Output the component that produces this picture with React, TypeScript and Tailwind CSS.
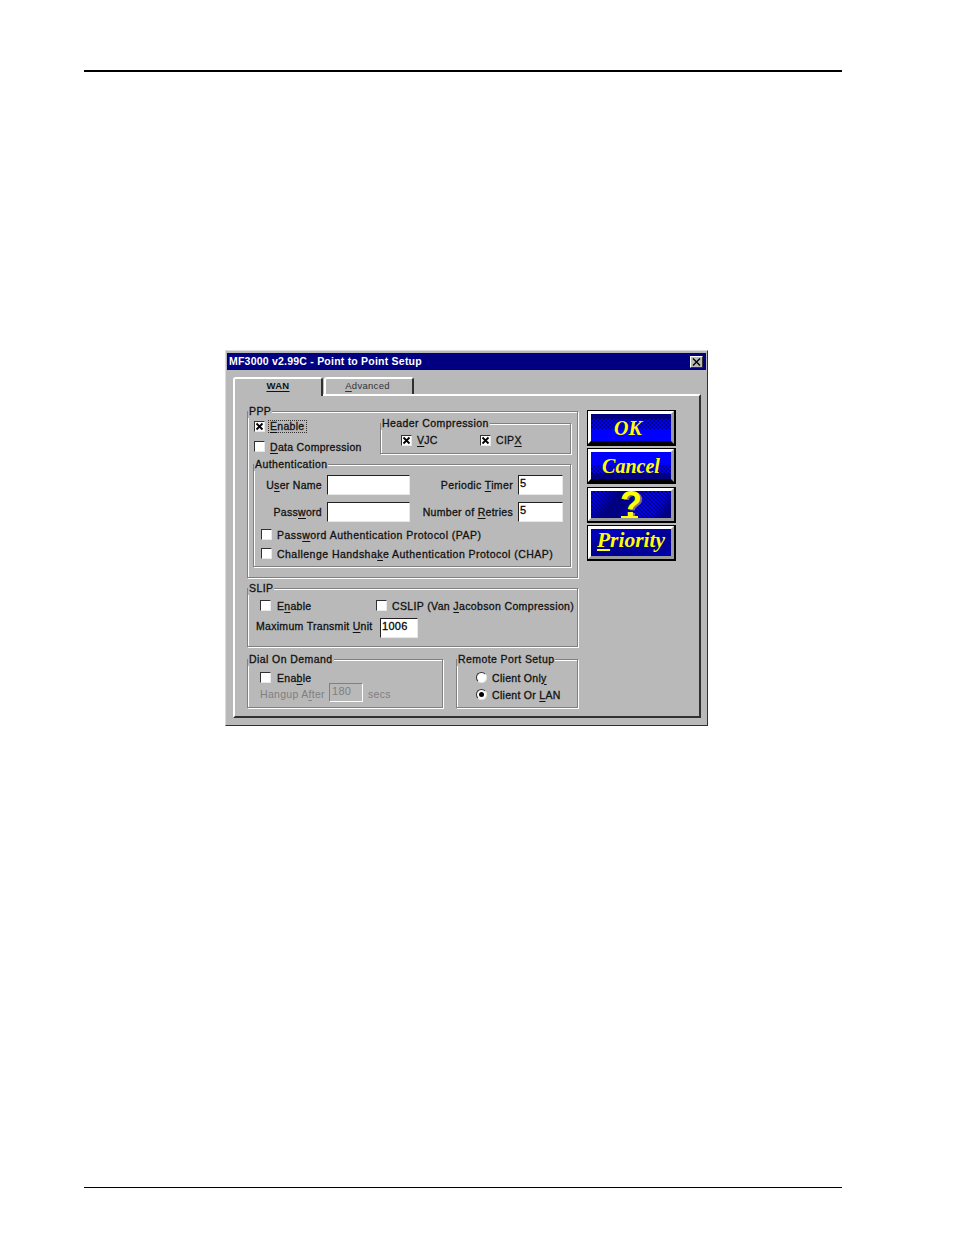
import React from 'react';

const U = ({ children }: { children: React.ReactNode }) => <span className="underline underline-offset-2">{children}</span>;

// labels sit one pixel below the centre of their row
const T = ({ className = '', children }: { className?: string; children: React.ReactNode }) => (
  <span className={`pt-[2px] whitespace-nowrap ${className}`}>{children}</span>
);

function GroupBox({ title, className, children }: { title: string; className: string; children?: React.ReactNode }) {
  return (
    <div className={`relative shrink-0 border border-[#808080] shadow-[inset_1px_1px_0_#fff,1px_1px_0_#fff] ${className}`}>
      <span className="absolute -top-[8px] left-[0px] bg-[#b9b9b9] px-px leading-[14px] tracking-[0.42px] whitespace-nowrap">{title}</span>
      {children}
    </div>
  );
}

function Check({ checked = false }: { checked?: boolean }) {
  return (
    <div className="w-[11px] h-[11px] shrink-0 bg-white border border-t-[#303030] border-l-[#303030] border-r-[#e8e8e8] border-b-[#e8e8e8]">
      {checked && (
        <svg viewBox="0 0 9 9" className="block w-[9px] h-[9px]">
          <path d="M1.5 1.5 L7.5 7.5 M7.5 1.5 L1.5 7.5" stroke="#000" strokeWidth="1.8" />
        </svg>
      )}
    </div>
  );
}

function Radio({ on = false }: { on?: boolean }) {
  return (
    <div className="flex items-center justify-center w-[11px] h-[11px] shrink-0 rounded-full bg-white border border-t-[#303030] border-l-[#303030] border-r-[#e8e8e8] border-b-[#e8e8e8]">
      {on && <div className="w-[5px] h-[5px] rounded-full bg-black" />}
    </div>
  );
}

function Input({ value, className, disabled = false }: { value?: string; className: string; disabled?: boolean }) {
  return (
    <div className={`shrink-0 border border-t-[#202020] border-l-[#202020] border-r-[#e8e8e8] border-b-[#e8e8e8] leading-[15px] text-[11px] ${disabled ? 'bg-[#b9b9b9] text-[#808080]' : 'bg-white text-black'} ${className}`}>
      {value}
    </div>
  );
}

function PicButton({ className, face, children }: { className: string; face: string; children: React.ReactNode }) {
  return (
    <div className={`border border-black bg-black pr-px pb-px ${className}`}>
      <div className={`flex items-center justify-center h-full border-[3px] border-t-white border-l-white border-r-[#9a9a9a] font-['Liberation_Serif'] italic font-bold text-[#ffff00] ${face}`}>
        {children}
      </div>
    </div>
  );
}

export default function App() {
  return (
    <div className="w-[954px] h-[1235px] bg-white overflow-hidden font-['Liberation_Sans',sans-serif] text-[10.5px] tracking-[0.3px] text-[#111] [-webkit-text-stroke:0.3px_#111]">
      <div className="h-[70px]" />
      <div className="ml-[84px] w-[758px] h-[2px] bg-black" />

      {/* dialog */}
      <div className="ml-[225px] mt-[278px] w-[483px] h-[376px] bg-[#b9b9b9] border border-t-[#dcdcdc] border-l-[#dcdcdc] border-r-[#303030] border-b-[#303030] p-[1px] pt-[2px]">
        <div className="flex items-center justify-between h-[17px] bg-[#000080] pl-[2px] pr-[3px] text-white font-bold text-[10.5px] tracking-[0.22px] [-webkit-text-stroke:0]">
          <span>MF3000 v2.99C - Point to Point Setup</span>
          <span className="flex items-center justify-center w-[13px] h-[12px] bg-[#b9b9b9] border border-t-white border-l-white border-r-[#303030] border-b-[#303030]">
            <svg viewBox="0 0 9 8" className="w-[9px] h-[8px]">
              <path d="M1 0.5 L8 7.5 M8 0.5 L1 7.5" stroke="#000" strokeWidth="1.4" />
            </svg>
          </span>
        </div>

        {/* tabs */}
        <div className="flex items-end h-[24px] pl-[6px]">
          <div className="relative z-10 flex items-center justify-center w-[90px] h-[19px] -mb-[2px] bg-[#b9b9b9] border-t-2 border-l-2 border-white border-r-2 border-r-[#303030] rounded-tl-[3px] rounded-tr-[3px] text-[9.5px] font-bold [-webkit-text-stroke:0]">
            <span className="underline underline-offset-2 -mt-[2px]">WAN</span>
          </div>
          <div className="flex items-center justify-center w-[90px] h-[17px] ml-px bg-[#b9b9b9] border-t-2 border-l-2 border-white border-r-2 border-r-[#303030] rounded-tl-[3px] rounded-tr-[3px] text-[9.5px] text-[#333] [-webkit-text-stroke:0]">
            <span className="-ml-[3px]"><U>A</U>dvanced</span>
          </div>
        </div>

        {/* panel */}
        <div className="ml-[6px] w-[468px] h-[324px] border-2 border-t-white border-l-white border-r-[#303030] border-b-[#303030] flex pl-[12px] pt-[15px] gap-[9px]">
          <div className="w-[331px] shrink-0">
            <GroupBox title="PPP" className="w-[331px] h-[167px] pl-[5px]">
              <div className="flex h-[52px]">
                <div className="w-[127px] pl-[1px] pt-[9px]">
                  <div className="flex items-center gap-[3px] h-[11px]">
                    <Check checked />
                    <span className="border border-dotted border-[#333] px-px leading-[11px]"><U>E</U>nable</span>
                  </div>
                  <div className="flex items-center gap-[3px] h-[11px] mt-[9px]">
                    <Check />
                    <T className="ml-[2px]"><U>D</U>ata Compression</T>
                  </div>
                </div>
                <GroupBox title="Header Compression" className="w-[191px] h-[31px] mt-[11px] flex items-center pt-[3px]">
                  <div className="flex items-center gap-[5px] ml-[20px] w-[79px]">
                    <Check checked />
                    <T><U>V</U>JC</T>
                  </div>
                  <div className="flex items-center gap-[5px]">
                    <Check checked />
                    <T>CIP<U>X</U></T>
                  </div>
                </GroupBox>
              </div>
              <GroupBox title="Authentication" className="w-[318px] h-[103px] pt-[10px] pl-[7px]">
                <div className="flex items-center h-[20px]">
                  <T className="w-[61px] text-right">U<U>s</U>er Name</T>
                  <Input className="w-[83px] h-[20px] ml-[5px]" />
                  <T className="w-[103px] text-right tracking-[0.36px]">Periodic <U>T</U>imer</T>
                  <Input value="5" className="w-[45px] h-[20px] ml-[5px] pl-[1px]" />
                </div>
                <div className="flex items-center h-[20px] mt-[7px]">
                  <T className="w-[61px] text-right">Pass<U>w</U>ord</T>
                  <Input className="w-[83px] h-[20px] ml-[5px]" />
                  <T className="w-[103px] text-right">Number of <U>R</U>etries</T>
                  <Input value="5" className="w-[45px] h-[20px] ml-[5px] pl-[1px]" />
                </div>
                <div className="flex items-center gap-[5px] h-[11px] mt-[7px]">
                  <Check />
                  <T className="tracking-[0.47px]">Pass<U>w</U>ord Authentication Protocol (PAP)</T>
                </div>
                <div className="flex items-center gap-[5px] h-[11px] mt-[8px]">
                  <Check />
                  <T className="tracking-[0.47px]">Challenge Handsha<U>k</U>e Authentication Protocol (CHAP)</T>
                </div>
              </GroupBox>
            </GroupBox>

            <GroupBox title="SLIP" className="w-[331px] h-[59px] mt-[10px] pt-[11px] pl-[12px]">
              <div className="flex items-center h-[11px]">
                <Check />
                <T className="ml-[6px] w-[99px]">E<U>n</U>able</T>
                <Check />
                <T className="ml-[5px] tracking-[0.36px]">CSLIP (Van <U>J</U>acobson Compression)</T>
              </div>
              <div className="flex items-center h-[20px] mt-[7px] -ml-[4px]">
                <span className="w-[123px] whitespace-nowrap -mt-[3px]">Maximum Transmit <U>U</U>nit</span>
                <Input value="1006" className="w-[38px] h-[20px] ml-[1px] pl-[1px]" />
              </div>
            </GroupBox>

            <div className="flex gap-[13px] mt-[12px]">
              <GroupBox title="Dial On Demand" className="w-[196px] h-[49px] pt-[12px] pl-[12px]">
                <div className="flex items-center h-[11px]">
                  <Check />
                  <T className="ml-[6px]">Ena<U>b</U>le</T>
                </div>
                <div className="flex items-center h-[19px] text-[#808080] [-webkit-text-stroke:0]">
                  <T className="w-[69px] pt-[4px]">Hangup A<U>f</U>ter</T>
                  <Input disabled value="180" className="w-[34px] h-[19px] pl-[2px] border-t-[#808080] border-l-[#808080] border-r-white border-b-white" />
                  <T className="ml-[5px] pt-[4px]">secs</T>
                </div>
              </GroupBox>
              <GroupBox title="Remote Port Setup" className="w-[122px] h-[49px] pt-[12px] pl-[19px]">
                <div className="flex items-center gap-[5px] h-[11px]">
                  <Radio />
                  <T>Client Onl<U>y</U></T>
                </div>
                <div className="flex items-center gap-[5px] h-[11px] mt-[6px]">
                  <Radio on />
                  <T>Client Or <U>L</U>AN</T>
                </div>
              </GroupBox>
            </div>
          </div>

          {/* picture buttons */}
          <div className="w-[89px] shrink-0 -mt-[1px] [-webkit-text-stroke:0] tracking-normal">
            <PicButton
              className="h-[36px]"
              face="text-[20px] border-b-black bg-[linear-gradient(#000080_0_5px,transparent_5px_15px,#0000ff_15px),repeating-conic-gradient(#0000ff_0_25%,#000080_0_50%)] bg-[length:auto,4px_4px]"
            >
              <span className="-ml-[6px]">OK</span>
            </PicButton>
            <PicButton
              className="h-[36px] mt-[2px]"
              face="text-[20px] border-b-black bg-[linear-gradient(#0000ff_0_13px,transparent_13px_21px,#000080_21px),repeating-conic-gradient(#0000ff_0_25%,#000080_0_50%)] bg-[length:auto,4px_4px]"
            >
              Cancel
            </PicButton>
            <PicButton
              className="h-[36px] mt-[3px]"
              face="relative text-[36px] border-b-[#9a9a9a] bg-[repeating-conic-gradient(#000080_0_25%,transparent_0_50%),linear-gradient(125deg,#0000ff_0_12%,#000080_30%_42%,#0000ff_58%_78%,#000080_92%)] bg-[length:4px_4px,auto]"
            >
              <span className="font-['Liberation_Sans'] not-italic font-bold leading-[28px] [text-shadow:2px_1px_0_#777]">?</span>
              <span className="absolute bottom-0 left-[30px] w-[17px] h-[2px] bg-[#ffff00]" />
            </PicButton>
            <PicButton
              className="h-[36px] mt-[2px]"
              face="text-[21.5px] border-b-[#9a9a9a] bg-[repeating-conic-gradient(#0000a8_0_25%,transparent_0_50%),linear-gradient(170deg,#0000d0_0_18%,#000080_42%_72%,#0000b0_100%)] bg-[length:4px_4px,auto]"
            >
              <span className="-mt-[5px]"><span className="underline underline-offset-2 decoration-2">P</span>riority</span>
            </PicButton>
          </div>
        </div>
      </div>

      <div className="ml-[84px] mt-[461px] w-[758px] h-px bg-black" />
    </div>
  );
}
